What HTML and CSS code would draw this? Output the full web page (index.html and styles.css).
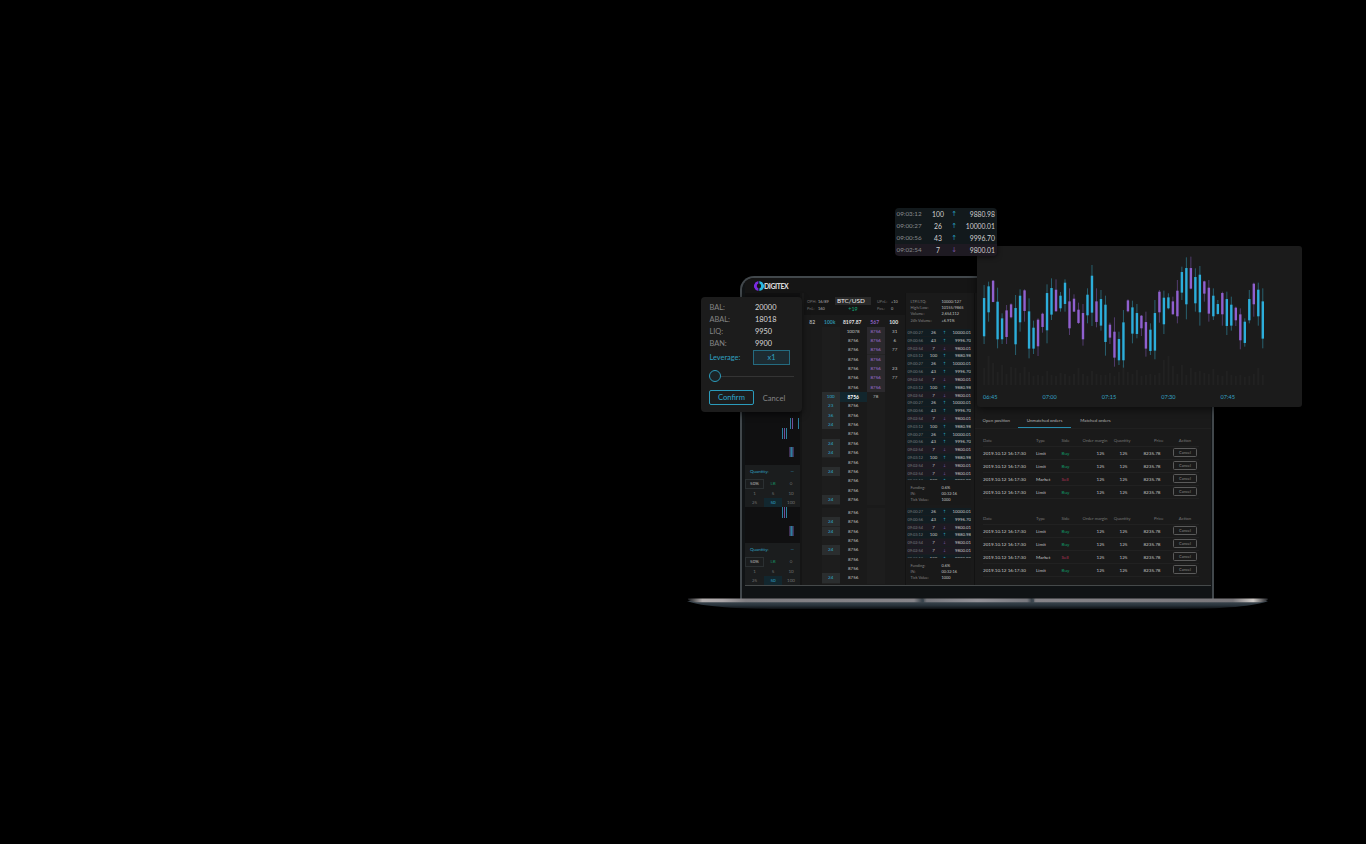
FILE: index.html
```html
<!DOCTYPE html>
<html lang="en">
<head>
<meta charset="utf-8">
<title>Digitex</title>
<link rel="stylesheet" href="styles.css">
</head>
<body>
<main class="stage">
  <section class="laptop">
    <header class="topbar">
      <svg class="logo" viewBox="0 0 10 10"><path d="M4.400 0 1.600 1.200 0 4v2.200L1.800 9l2.600 1V7.300L2.900 6.200V3.800l1.500-1.200z" fill="#7a2be0"/><path d="M5.400 0 8.200 1.200 10 4v2.200L8.200 9 5.400 10V7.600L7 6.300V3.800L5.400 2.500z" fill="#28b8e0"/></svg>
      <span class="brand">DIGITEX</span>
    </header>
    <div class="workspace">
      <aside class="side">
        <svg class="mini first" viewBox="0 0 55 172"><path d="M45.500 125v11M53.500 125v11M37.500 135v11M41.500 135v11" stroke="#2c7f9e"/><path d="M47.500 125v11M39.500 135v11M45 154v10M48 154v10" stroke="#70509a"/><path d="M46.500 154v10" stroke="#2c7f9e" stroke-width="2"/></svg>
        <div class="qty"></div>
        <svg class="mini second" viewBox="0 0 55 36"><path d="M37.500 0v11M41.500 0v11" stroke="#2c7f9e"/><path d="M39.500 0v11M45 19v10M48 19v10" stroke="#70509a"/><path d="M46.500 19v10" stroke="#2c7f9e" stroke-width="2"/></svg>
        <div class="qty"></div>
      </aside>
      <section class="ladder">
        <div class="pair">
          <div class="stats"><span>OPH:</span><b>16/89</b><span>PnL:</span><b>160</b></div>
          <div class="symbol"><strong>BTC/USD</strong><em>+19</em></div>
          <div class="stats right"><span>UPnL:</span><b>+10</b><span>Pos.:</span><b>0</b></div>
        </div>
        <div class="totals"><span>82</span><span class="cy">100k</span><b>8197.87</b><span class="pu">567</span><b>100</b></div>
        <div id="ladder-a"></div>
        <div id="ladder-b"></div>
      </section>
      <section class="tape">
        <div class="facts market"><span>LTP/LTQ:</span><b>10000/127</b><span>High/Low:</span><b>10155/9865</b><span>Volume:</span><b>2,654,112</b><span>24h Volume:</span><b>+6.91%</b></div>
        <div class="feed feed-a" id="feed-a"></div>
        <div class="facts funding"><span>Funding:</span><b>0.6%</b><span>IN:</span><b>00:32:16</b><span>Tick Value:</span><b>1000</b></div>
        <div class="feed feed-b" id="feed-b"></div>
        <div class="facts funding"><span>Funding:</span><b>0.6%</b><span>IN:</span><b>00:32:16</b><span>Tick Value:</span><b>1000</b></div>
      </section>
      <section class="orders">
        <nav class="tabs"><span>Open position</span><span class="active">Unmatched orders</span><span>Matched orders</span></nav>
        <div class="table"></div>
        <div class="table"></div>
      </section>
    </div>
  </section>

  <svg class="base" viewBox="0 0 582 12">
    <defs>
      <linearGradient id="rim"><stop offset="0" stop-color="#1b1d20"/><stop offset=".025" stop-color="#b3aeae"/><stop offset=".06" stop-color="#aaa5a7"/><stop offset=".1" stop-color="#7f7d81"/><stop offset=".39" stop-color="#858388"/><stop offset=".404" stop-color="#39424a"/><stop offset=".412" stop-color="#77777d"/><stop offset=".5" stop-color="#929096"/><stop offset=".585" stop-color="#77777d"/><stop offset=".593" stop-color="#39424a"/><stop offset=".6" stop-color="#858388"/><stop offset=".94" stop-color="#79777b"/><stop offset=".975" stop-color="#d0cbc8"/><stop offset="1" stop-color="#222428"/></linearGradient>
      <linearGradient id="under" x2="0" y2="1"><stop offset="0" stop-color="#404b54"/><stop offset=".55" stop-color="#28323a"/><stop offset="1" stop-color="#0b0e11"/></linearGradient>
    </defs>
    <path d="M0 3C12 8 45 11 95 11H487C537 11 570 8 581 3z" fill="url(#under)"/>
    <path d="M1 .5H580.500Q582 3 573 4.200H9Q0 3 1 .5z" fill="url(#rim)"/>
    <path d="M236 1.200V4.200M346 1.200V4.200" stroke="#39444d" stroke-width="1.500"/>
  </svg>

  <section class="chart">
    <svg id="candles" viewBox="0 0 325 145"></svg>
    <div class="times"><span>06:45</span><span>07:00</span><span>07:15</span><span>07:30</span><span>07:45</span></div>
  </section>

  <section class="ticker" id="ticker"></section>

  <section class="balance">
    <div class="sums"><span>BAL:</span><b>20000</b><span>ABAL:</span><b>18018</b><span>LIQ:</span><b>9950</b><span>BAN:</span><b>9900</b></div>
    <div class="leverage"><span>Leverage:</span><b>x1</b></div>
    <div class="slider"><i></i></div>
    <div class="actions"><button class="confirm">Confirm</button><button class="cancel">Cancel</button></div>
  </section>
</main>
<script src="app.js"></script>
</body>
</html>
```

FILE: styles.css
```css
* { box-sizing: border-box; }
body { margin: 0; background: #000; font-family: Lato, "Open Sans", sans-serif; }
b, em, strong { font-style: normal; font-weight: 400; }
svg { display: block; }
.stage { position: relative; width: 1366px; height: 844px; overflow: hidden; }

.laptop { position: absolute; left: 740px; top: 276px; width: 474px; height: 323px; border: 2px solid #41474b; border-bottom: 0; border-radius: 14px 14px 0 0; background: #101315; padding: 0 1px 0 3px; overflow: hidden; }
.topbar { height: 15px; padding: 3px 0 0 9px; display: flex; gap: 0; background: #151515; }
.logo { width: 10px; height: 10px; }
.brand { font: 900 6.800px/10px Lato, sans-serif; color: #d8d8d8; letter-spacing: -.35px; }
.workspace { display: flex; height: 293px; border-bottom: 1px solid #45494a; background: #1a1a1a; font-size: 4.500px; color: #bbb; }

.side { width: 57px; display: flex; flex-direction: column; background: #151515; }
.mini { width: 55px; background: #101011; stroke-width: 1; flex: none; }
.first { height: 172px; }
.second { height: 36px; }
.qty { width: 55px; height: 42px; padding: 3px 0 0; background: #1b1d1e; color: #727272; flex: none; }
.qty-title { display: flex; justify-content: space-between; height: 11px; padding: 0 6px 0 5px; line-height: 8px; color: #2fa0c2; }
.qty-grid { display: grid; grid-template-columns: 19px 18px 18px; grid-template-rows: 9.500px 9px 9px; margin-left: 0; text-align: center; line-height: 9.500px; }
.qty-grid .box { outline: 1px solid #2b3032; outline-offset: -1px; color: #bbb; }
.qty-grid .lb { color: #158a60; }
.qty-grid .on { background: #12272f; color: #2fa8cc; }

.ladder { width: 102px; margin-left: 2px; }
.pair { display: flex; height: 22px; padding-top: 3px; background: #151515; font-size: 3.900px; line-height: 7px; color: #707070; }
.stats { width: 31px; display: grid; grid-template-columns: 11px 1fr; grid-auto-rows: 7px; padding: 2px 0 0 3px; }
.stats b { color: #b0b0b0; }
.stats.right { width: 35px; grid-template-columns: 14px 1fr; padding-left: 6px; }
.symbol { width: 36px; text-align: center; }
.symbol strong { display: block; height: 8px; background: #292929; color: #eee; font-size: 6.400px; line-height: 8px; margin-top: 1px; text-align: left; padding-left: 2px; }
.symbol em { display: block; color: #12a775; font-size: 5.400px; line-height: 8px; }
.totals, .step { display: grid; grid-template-columns: 17px 18px 27px 18px 20px; text-align: center; }
.totals, #ladder-a, #ladder-b { padding-left: .7px; }
.totals { height: 11.500px; line-height: 14px; font-size: 5px; font-weight: 700; color: #aaa; margin-left: -1px; }
.totals b { color: #e4e4e4; font-weight: 700; }
.totals .cy { color: #2c91af; }
.totals .pu { color: #8d61c4; }
.step { height: 9.360px; line-height: 10.200px; color: #c6c6c6; }
.step span:nth-child(2), .step span:nth-child(4) { background: #1d1d1d; }
.step .bid.bid { background: #2a2d2e; color: #2fa8cc; box-shadow: inset 0 -1px #222; }
.step .ask.ask { background: #2b292d; color: #a374dd; box-shadow: inset 0 -1px #242424; }
.step .last { background: #12262d; color: #fff; font-weight: 700; font-size: 4.900px; }
#ladder-b { margin-top: 3.600px; height: 75px; }

.tape { width: 69px; margin-left: -1.500px; border-left: 1px solid #131313; padding: 0 2.500px 0 1px; }
.facts { display: grid; grid-template-columns: 31px 1fr; font-size: 3.900px; color: #828282; padding-left: 4px; }
.facts b { color: #c2c2c2; }
.market { height: 36px; padding-top: 6px; grid-auto-rows: 6.200px; line-height: 6.200px; }
.funding { height: 25px; padding-top: 5px; grid-auto-rows: 6px; line-height: 6px; background: #191919; }
.feed { overflow: hidden; background: #141b1e; }
.feed-a { height: 151px; }
.feed-b { height: 50px; margin-top: 3px; }
.trade { display: grid; grid-template-columns: 20.500px 13px 9px 1fr; height: 7.820px; line-height: 8.400px; text-align: center; background: #121d22; border-bottom: 1px solid #181d20; font-size: 4.300px; color: #c6c6c6; }
.trade.down { background: #1d1a22; }
.trade :first-child { text-align: left; padding-left: 1px; font-size: 3.900px; color: #7a7e80; }
.trade :last-child { text-align: right; padding-right: 0; }
.arrow { color: #2799b9; font-family: "DejaVu Sans", sans-serif; }
.down .arrow { color: #72509e; }

.orders { flex: 1; border-left: 1px solid #121212; padding-top: 119px; }
.tabs { display: flex; height: 17px; line-height: 17px; font-size: 4.400px; color: #b0b0b0; border-bottom: 1px solid #202020; }
.tabs span { width: 49px; text-align: center; white-space: nowrap; }
.tabs span:first-child { width: 43.500px; }
.tabs .active { width: 53px; border-bottom: 1px solid #288bad; color: #b8b8b8; }
.table { height: 78px; padding: 5px 12px 0 8.500px; }
.order { display: grid; grid-template-columns: 53px 25.500px 14px 29px 23px 33px 12.500px 24px; height: 12.950px; line-height: 12px; border-bottom: 1px solid #212121; font-size: 4.600px; white-space: nowrap; color: #c4c4c4; }
.order.head { font-size: 4.300px; color: #777; line-height: 13px; }
.order :nth-child(n+4):nth-child(-n+6) { text-align: right; }
.head :nth-child(n+4):nth-child(-n+6) { margin-right: -3px; }
.head :last-child { text-align: center; }
.order .buy { color: #109b69; }
.order .sell { color: #b93358; }
.act { border: 1px solid #5a5a5a; border-radius: 1.500px; height: 9px; margin-top: 1px; line-height: 7px; text-align: center; font-size: 4px; color: #888; }

.base { position: absolute; left: 686.500px; top: 598px; width: 582px; height: 12px; }

.chart { position: absolute; left: 977px; top: 246px; width: 325px; height: 161px; border-radius: 3px; background: #1b1b1b; box-shadow: 0 2px 8px #0009; }
#candles { width: 325px; height: 145px; }
.times { display: flex; padding-left: 6px; font-size: 5.600px; line-height: 12px; color: #35a2c4; }
.times span { width: 59.400px; }

.ticker { position: absolute; left: 895px; top: 208px; width: 102px; height: 48px; border-radius: 4px; overflow: hidden; box-shadow: 0 1px 5px #0008; }
.tick { display: grid; grid-template-columns: 33px 20px 12px 1fr; height: 12px; line-height: 13px; text-align: center; background: #12191c; font-size: 6.800px; color: #d0d0d0; }
.tick.down { background: #1e1a22; }
.tick :first-child { text-align: left; padding-left: 1.500px; font-size: 6.300px; line-height: 11.500px; color: #888b8d; }
.tick :last-child { text-align: right; padding-right: 2px; }

.balance { position: absolute; left: 701px; top: 297px; width: 101px; height: 115px; padding: 4px 8px 0; border-radius: 4px; background: #1c1c1c; box-shadow: 0 2px 7px #0009; font-size: 7.400px; }
.sums { display: grid; grid-template-columns: 45.500px 1fr; grid-auto-rows: 12px; line-height: 13px; color: #858585; padding-left: .5px; }
.sums b { color: #d8d8d8; }
.leverage { display: flex; justify-content: space-between; line-height: 16px; color: #2fa0c2; margin: 1px 4px 0 0; height: 15px; padding-left: .5px; }
.leverage b { width: 37px; height: 15px; line-height: 14px; text-align: center; border: 1px solid #246b80; background: #1d2b31; }
.slider { height: 12px; margin-top: 5px; background: linear-gradient(#343434, #343434) 0 6px / 85px 1px no-repeat; }
.slider i { display: block; width: 12px; height: 12px; border: 1px solid #2b9bbb; border-radius: 50%; background: #1b2326; }
.actions { display: flex; margin-top: 8px; }
.actions button { font: 7.600px/14px Lato, sans-serif; padding: 0; height: 15px; background: none; border: 0; color: #858585; }
.actions .confirm { width: 47px; border: 1px solid #2b9bbb; border-radius: 2px; color: #2fa8cc; line-height: 13px; }
.actions .cancel { width: 42px; }
```

FILE: app.js
```js
const cells = (items) => items.map((t) => `<span>${t}</span>`).join('');
const $ = (id) => document.getElementById(id);

document.querySelectorAll('.qty').forEach((el) => {
  el.innerHTML = '<div class="qty-title"><span>Quantity:</span><span>—</span></div>' +
    '<div class="qty-grid"><span class="box">50%</span><span class="lb">LB</span><span>○</span>' +
    '<span>1</span><span>5</span><span>10</span><span>25</span><span class="on">50</span><span>100</span></div>';
});

// Price ladder: [bid quantity, price, ask quantity, note]
const ladderRow = ([bid, price, ask, note, last]) =>
  `<div class="step"><span></span><span class="${bid ? 'bid' : ''}">${bid || ''}</span>` +
  `<span class="${last ? 'last' : ''}">${price}</span><span class="${ask === '8756' ? 'ask' : ''}">${ask || ''}</span><span>${note || ''}</span></div>`;
const asks = [['31'], ['6'], ['77'], [''], ['23'], ['77'], ['']]
  .map(([note], i) => ['', i ? '8756' : '10078', '8756', note]);
const bids = ['23', '36', '24', '', '24', '24', '', '24', '', '', '24'].map((q) => [q, '8756']);
$('ladder-a').innerHTML = [...asks, ['100', '8756', '78', '', true], ...bids].map(ladderRow).join('');
$('ladder-b').innerHTML = ['', '24', '24', '', '24', '', '', '24'].map((q) => ladderRow([q, '8756'])).join('');

// Recent trades
const trades = {
  26: ['09:00:27', '26', '↑', '10000.01'],
  43: ['09:00:56', '43', '↑', '9996.70'],
  7: ['09:02:54', '7', '↓', '9800.01'],
  100: ['09:03:12', '100', '↑', '9880.98'],
};
const tradeRow = (cls) => (k) => {
  const [time, n, dir, price] = trades[k];
  return `<div class="${cls} ${dir === '↓' ? 'down' : ''}"><span>${time}</span><span>${n}</span><span class="arrow">${dir}</span><span>${price}</span></div>`;
};
$('feed-a').innerHTML = [26, 43, 7, 100, 26, 43, 7, 100, 7, 26, 43, 7, 100, 26, 43, 7, 100, 7, 7, 100].map(tradeRow('trade')).join('');
$('feed-b').innerHTML = [26, 43, 7, 100, 7, 7, 100].map(tradeRow('trade')).join('');
$('ticker').innerHTML = [100, 26, 43, 7].map(tradeRow('tick')).join('');

// Orders
document.querySelectorAll('.table').forEach((el) => {
  const head = `<div class="order head">${cells(['Date', 'Type', 'Side', 'Order margin', 'Quantity', 'Price', '', 'Action'])}</div>`;
  const rows = ['Limit', 'Limit', 'Market', 'Limit'].map((type) => {
    const sell = type === 'Market';
    return `<div class="order"><span>2019.10.12 16:17:30</span><span>${type}</span><span class="${sell ? 'sell' : 'buy'}">${sell ? 'Sell' : 'Buy'}</span>` +
      '<span>125</span><span>125</span><span>8235.78</span><span></span><span class="act">Cancel</span></div>';
  });
  el.innerHTML = head + rows.join('');
});

// Candles: colour, high, body top, body bottom, low (thirds of a pixel)
const candles = `c135,175,288,312 c125,140,216,245 p120,123,185,187 c143,186,297,325 c220,236,297,312 p195,212,290,312 p190,194,231,235
c165,205,312,345 c148,168,246,275 p148,152,212,245 c175,215,325,355 c242,264,325,342 p235,240,318,348 p218,222,260,278
c133,160,270,310 c115,145,223,240 p118,150,213,215 c156,168,204,215 c118,129,191,215 p145,185,264,285 p163,177,214,216
p188,210,248,252 p192,220,297,317 c145,165,225,250 c75,108,217,258 p145,185,245,262 c150,178,256,272 c167,195,305,347
p248,255,292,312 p232,276,352,380 c275,298,360,375 c210,248,360,383 p178,182,213,217 c182,203,280,310 c192,220,281,295
p225,228,264,288 p215,247,325,350 c250,270,332,345 c180,220,331,358 p150,156,216,248 c152,174,252,282 c160,173,204,208
p170,185,222,224 p120,153,228,250 c80,97,157,180 c52,85,192,238 p50,85,145,148 c85,112,189,215 c78,105,216,257
p122,125,160,185 p120,144,220,245 c145,168,228,240 c180,193,221,224 p155,160,222,257 c155,178,257,285 c170,195,256,272
p200,204,240,258 p205,224,300,328 c235,246,308,320 c150,178,240,250 p128,132,192,230 c128,150,228,257 c145,185,295,325`.split(/\s+/);
const volume = [17, 29, 22, 13, 20, 11, 18, 17, 12, 18, 13, 9, 10, 9, 14, 10, 9, 12, 11, 9, 11, 17, 11, 9, 14, 11, 10, 10, 12, 9, 13, 20, 13, 11, 15, 9, 10, 11, 10, 12, 25, 29, 19, 11, 20, 10, 17, 13, 14, 12, 11, 16, 10, 9, 14, 10, 9, 10, 8, 9, 11, 17, 10];
const svg = candles.map((s, i) => {
  const [hi, top, bottom, lo] = s.slice(1).split(',').map((v) => v / 3 - 6);
  const x = 7.1 + i * 4.495;
  const body = s[0] === 'c' ? '#2caedb' : '#9060cf';
  const wick = s[0] === 'c' ? '#28606f' : '#513b6d';
  return `<path d="M${x} ${139 - volume[i]}V139" stroke="#212121" stroke-width="2"/>` +
    `<path d="M${x} ${hi}V${lo}" stroke="${wick}"/>` +
    `<path d="M${x} ${top - 0.3}V${bottom + 0.3}" stroke="${body}" stroke-width="2.4"/>`;
});
$('candles').innerHTML = svg.join('');
```
